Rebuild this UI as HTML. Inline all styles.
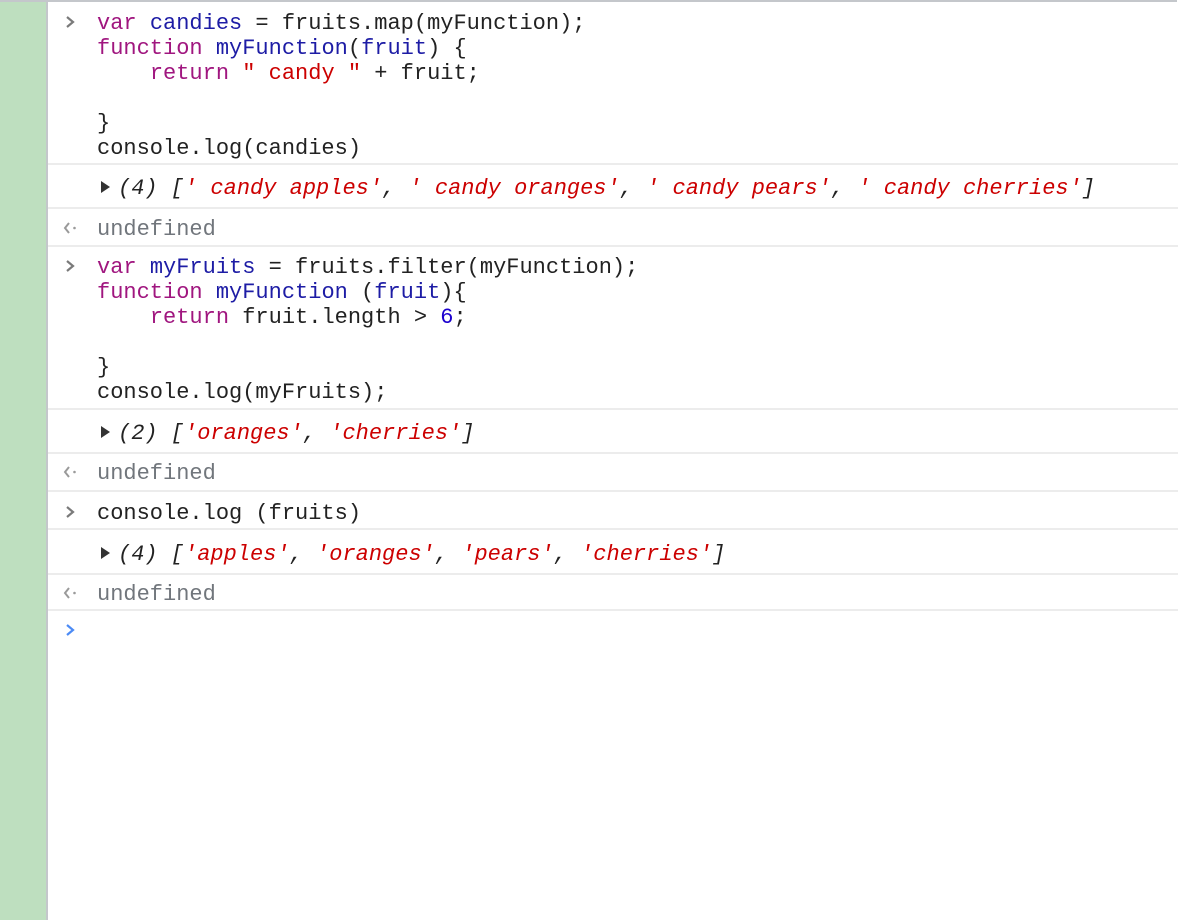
<!DOCTYPE html>
<html><head><meta charset="utf-8"><style>
html,body{margin:0;padding:0;width:1178px;height:920px;overflow:hidden;background:#fff;position:relative}
.side{position:absolute;left:0;top:0;width:46px;height:920px;background:#bedfbf}
.strip{position:absolute;left:46px;top:0;width:2px;height:920px;background:#c4c7cb}
.top{position:absolute;left:0;top:0;width:1177px;height:2px;background:#c4c7cb}
.l{position:absolute;left:97px;font-family:"Liberation Mono",monospace;font-size:22px;line-height:25px;height:25px;white-space:pre;color:#222}
.sep{position:absolute;left:48px;width:1130px;height:2px;background:#ececec}
.k{color:#a0167f}.n{color:#1d1ca5}.s{color:#c00}.num{color:#1c00cf}.u{color:#71767c}
.o{font-style:italic;color:#222}
svg.i{position:absolute;left:60px;width:20px;height:20px}
.tri{position:absolute;left:101px;width:0;height:0;border-left:9px solid #333;border-top:6px solid transparent;border-bottom:6px solid transparent}
</style></head><body>
<div class="side"></div><div class="strip"></div><div class="top"></div>
<svg class="i" style="top:12px" viewBox="0 0 20 20"><polyline points="7,5 13,10 7,15" fill="none" stroke="#7a7a7a" stroke-width="2.2"/></svg>
<div class="l" style="top:11px"><span class="k">var</span> <span class="n">candies</span> = fruits.map(myFunction);</div>
<div class="l" style="top:36px"><span class="k">function</span> <span class="n">myFunction</span>(<span class="n">fruit</span>) {</div>
<div class="l" style="top:61px">    <span class="k">return</span> <span class="s">" candy "</span> + fruit;</div>
<div class="l" style="top:111px">}</div>
<div class="l" style="top:136px">console.log(candies)</div>
<div class="sep" style="top:163px"></div>
<div class="tri" style="top:181px"></div>
<div class="l o" style="top:176px;left:118px">(4) [<span class="s">' candy apples'</span>, <span class="s">' candy oranges'</span>, <span class="s">' candy pears'</span>, <span class="s">' candy cherries'</span>]</div>
<div class="sep" style="top:207px"></div>
<svg class="i" style="top:218px" viewBox="0 0 20 20"><polyline points="9,5 5,10 9,15" fill="none" stroke="#9a9a9a" stroke-width="2"/><circle cx="14.5" cy="10" r="1.3" fill="#9a9a9a"/></svg>
<div class="l u" style="top:217px">undefined</div>
<div class="sep" style="top:245px"></div>
<svg class="i" style="top:256px" viewBox="0 0 20 20"><polyline points="7,5 13,10 7,15" fill="none" stroke="#7a7a7a" stroke-width="2.2"/></svg>
<div class="l" style="top:255px"><span class="k">var</span> <span class="n">myFruits</span> = fruits.filter(myFunction);</div>
<div class="l" style="top:280px"><span class="k">function</span> <span class="n">myFunction</span> (<span class="n">fruit</span>){</div>
<div class="l" style="top:305px">    <span class="k">return</span> fruit.length &gt; <span class="num">6</span>;</div>
<div class="l" style="top:355px">}</div>
<div class="l" style="top:380px">console.log(myFruits);</div>
<div class="sep" style="top:408px"></div>
<div class="tri" style="top:426px"></div>
<div class="l o" style="top:421px;left:118px">(2) [<span class="s">'oranges'</span>, <span class="s">'cherries'</span>]</div>
<div class="sep" style="top:452px"></div>
<svg class="i" style="top:462px" viewBox="0 0 20 20"><polyline points="9,5 5,10 9,15" fill="none" stroke="#9a9a9a" stroke-width="2"/><circle cx="14.5" cy="10" r="1.3" fill="#9a9a9a"/></svg>
<div class="l u" style="top:461px">undefined</div>
<div class="sep" style="top:490px"></div>
<svg class="i" style="top:502px" viewBox="0 0 20 20"><polyline points="7,5 13,10 7,15" fill="none" stroke="#7a7a7a" stroke-width="2.2"/></svg>
<div class="l" style="top:501px">console.log (fruits)</div>
<div class="sep" style="top:528px"></div>
<div class="tri" style="top:547px"></div>
<div class="l o" style="top:542px;left:118px">(4) [<span class="s">'apples'</span>, <span class="s">'oranges'</span>, <span class="s">'pears'</span>, <span class="s">'cherries'</span>]</div>
<div class="sep" style="top:573px"></div>
<svg class="i" style="top:583px" viewBox="0 0 20 20"><polyline points="9,5 5,10 9,15" fill="none" stroke="#9a9a9a" stroke-width="2"/><circle cx="14.5" cy="10" r="1.3" fill="#9a9a9a"/></svg>
<div class="l u" style="top:582px">undefined</div>
<div class="sep" style="top:609px"></div>
<svg class="i" style="top:620px" viewBox="0 0 20 20"><polyline points="7,5 13,10 7,15" fill="none" stroke="#4c8bf5" stroke-width="2.2"/></svg>
</body></html>
